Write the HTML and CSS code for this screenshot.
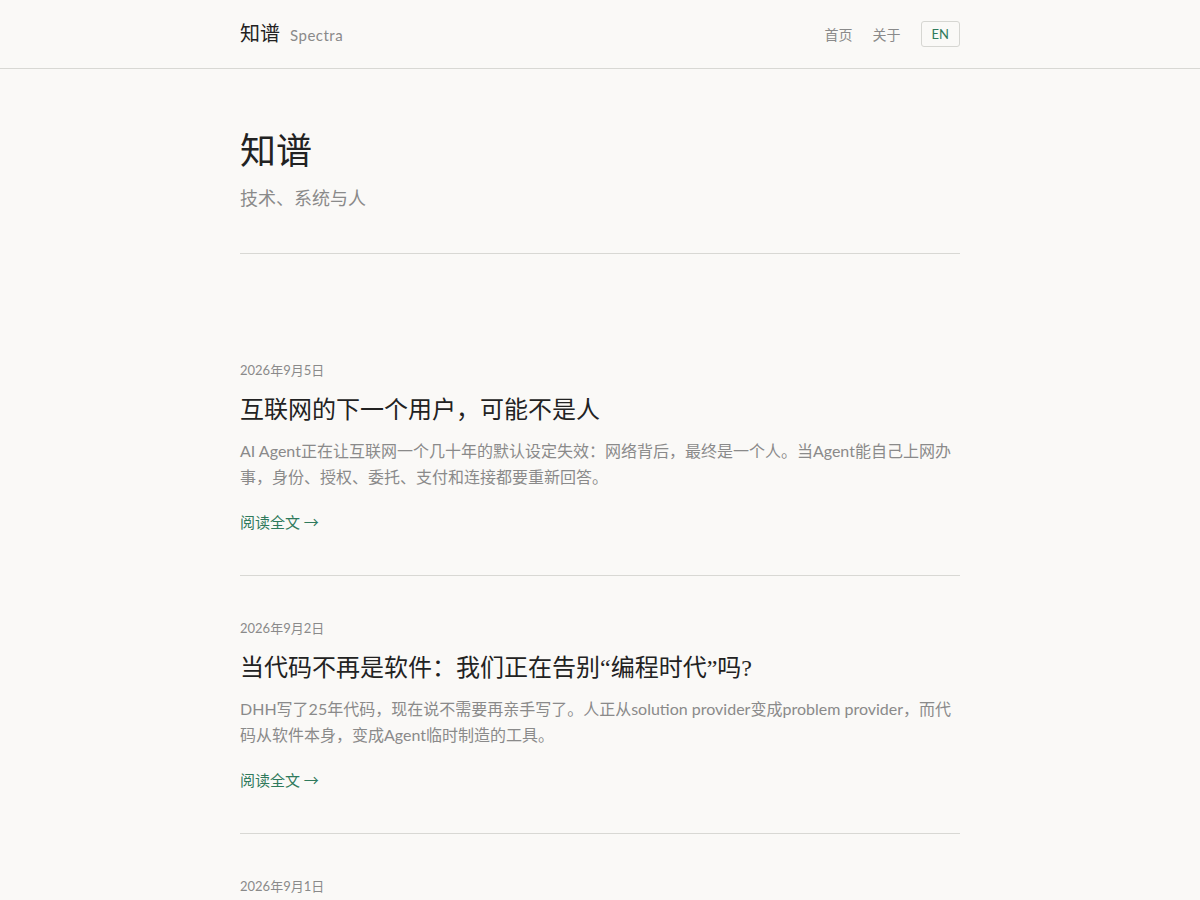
FILE: index.html
```html
<!DOCTYPE html>
<html lang="zh">
<head>
<meta charset="utf-8">
<title>知谱 Spectra</title>
<link rel="stylesheet" href="styles.css">
</head>
<body>
<header class="site-header">
  <div class="wrap header-inner">
    <a class="brand" href="#"><span class="brand-cn">知谱</span><span class="brand-en">Spectra</span></a>
    <nav class="nav">
      <a href="#">首页</a>
      <a href="#">关于</a>
      <a class="lang" href="#">EN</a>
    </nav>
  </div>
</header>
<main class="wrap">
  <section class="hero">
    <h1 class="hero-title">知谱</h1>
    <p class="hero-sub">技术、系统与人</p>
  </section>
  <section class="posts">
    <article class="post">
      <div class="post-date">2026年9月5日</div>
      <h2 class="post-title">互联网的下一个用户，可能不是人</h2>
      <p class="post-excerpt">AI Agent正在让互联网一个几十年的默认设定失效：网络背后，最终是一个人。当Agent能自己上网办事，身份、授权、委托、支付和连接都要重新回答。</p>
      <a class="read-more" href="#">阅读全文 <span class="arrow">→</span></a>
    </article>
    <article class="post">
      <div class="post-date">2026年9月2日</div>
      <h2 class="post-title">当代码不再是软件：我们正在告别“编程时代”吗?</h2>
      <p class="post-excerpt">DHH写了25年代码，现在说不需要再亲手写了。人正从solution provider变成problem provider，而代码从软件本身，变成Agent临时制造的工具。</p>
      <a class="read-more" href="#">阅读全文 <span class="arrow">→</span></a>
    </article>
    <article class="post">
      <div class="post-date">2026年9月1日</div>
    </article>
  </section>
</main>
</body>
</html>
```
FILE: styles.css
```css
* { box-sizing: border-box; }
html, body { margin: 0; padding: 0; }
body {
  background: #faf9f7;
  color: #222;
  font-family: "Lato", "Noto Sans CJK SC", sans-serif;
}
a { text-decoration: none; color: inherit; }
.wrap { width: 720px; margin: 0 auto; }

.site-header { border-bottom: 1px solid #d8d8d4; }
.header-inner {
  height: 68px;
  display: flex;
  align-items: center;
  justify-content: space-between;
}
.brand { display: flex; align-items: baseline; gap: 10px; margin-top: -3px; }
.brand-cn {
  font-family: "Liberation Serif", "Noto Sans CJK SC", serif;
  font-size: 20px;
  color: #222;
}
.brand-en {
  font-size: 15px;
  color: #8a8a8a;
  letter-spacing: 0.5px;
}
.nav { display: flex; align-items: center; gap: 20px; font-size: 14px; color: #8a8a8a; }
.nav .lang {
  border: 1px solid #d6d6d2;
  border-radius: 3px;
  color: #2f7a5c;
  font-size: 13px;
  padding: 0 10px;
  height: 26px;
  line-height: 24px;
}

.hero {
  padding: 58px 0 41px;
  border-bottom: 1px solid #d8d8d4;
}
.hero-title {
  margin: 0;
  font-family: "Liberation Serif", "Noto Sans CJK SC", serif;
  font-weight: 400;
  font-size: 36px;
  line-height: 50px;
  color: #222;
}
.hero-sub {
  margin: 7px 0 0;
  font-size: 18px;
  line-height: 28px;
  color: #8a8a8a;
}

.posts { padding-top: 64px; }
.post {
  padding: 42px 0 41px;
  border-bottom: 1px solid #d8d8d4;
}
.post-date { font-size: 13px; line-height: 20px; color: #8a8a8a; }
.post-title {
  margin: 12px 0 0;
  font-family: "Liberation Serif", "Noto Sans CJK SC", serif;
  font-weight: 400;
  font-size: 24px;
  line-height: 36px;
  color: #222;
}
.post-excerpt {
  margin: 10px 0 0;
  font-size: 16px;
  line-height: 26px;
  color: #8a8a8a;
}
.read-more {
  display: inline-block;
  margin-top: 20px;
  font-size: 15px;
  line-height: 24px;
  color: #2f7a5c;
}
.arrow { font-family: "Noto Sans CJK SC", sans-serif; }
```
